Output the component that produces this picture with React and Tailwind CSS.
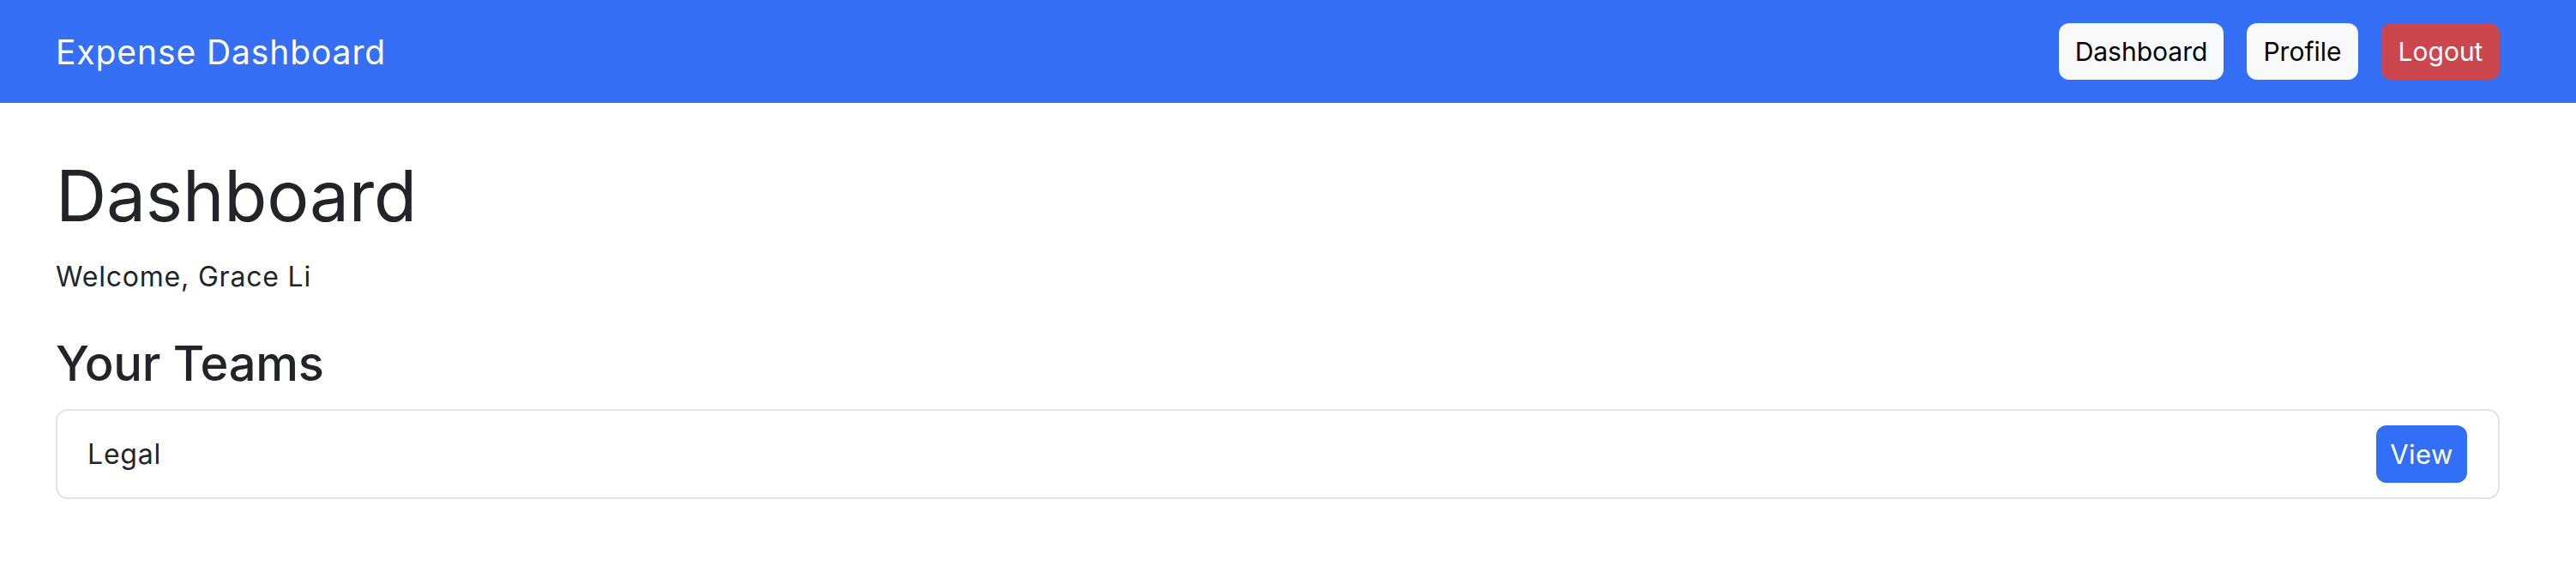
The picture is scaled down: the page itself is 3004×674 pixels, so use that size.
import React from "react";

const font = { fontFamily: "Inter, 'Noto Sans', 'Liberation Sans', sans-serif" };

function NavButton({ children, className }) {
  return (
    <button
      className={`h-[66px] rounded-[12px] text-[30px] leading-none flex items-center justify-center ${className}`}
    >
      {children}
    </button>
  );
}

function Navbar() {
  return (
    <nav className="h-[120px] bg-[#346ff5] flex items-center justify-between pl-[65px] pr-[89px]">
      <a className="text-white text-[39px] leading-none tracking-[0.9px]">Expense Dashboard</a>
      <div className="flex items-center gap-[27px]">
        <NavButton className="w-[192px] bg-[#f8f9fa] text-black">Dashboard</NavButton>
        <NavButton className="w-[130px] bg-[#f8f9fa] text-black">Profile</NavButton>
        <NavButton className="w-[138px] bg-[#cc464d] text-white">Logout</NavButton>
      </div>
    </nav>
  );
}

function TeamItem({ name }) {
  return (
    <li className="flex items-center justify-between border-2 border-[#e0e3e6] rounded-[14px] pl-[35px] pr-[36px] py-[17px]">
      <span className="text-[32px] leading-[48px] tracking-[0.8px]">{name}</span>
      <button className="w-[106px] h-[67px] rounded-[12px] bg-[#316ff6] text-white text-[31px] leading-none tracking-[0.4px]">
        View
      </button>
    </li>
  );
}

export default function App() {
  const teams = ["Legal"];
  return (
    <div className="min-h-screen bg-white text-[#212529]" style={font}>
      <Navbar />
      <main className="pl-[65px] pr-[89px] pt-[60px]">
        <h1 className="text-[82px] leading-[98px] font-normal tracking-[-0.2px]">Dashboard</h1>
        <p className="mt-[21px] text-[32px] leading-[48px] tracking-[0.8px]">Welcome, Grace Li</p>
        <h3 className="mt-[44px] text-[56px] leading-[67px] font-medium tracking-[-0.3px]">Your Teams</h3>
        <ul className="mt-[19px]">
          {teams.map((t) => (
            <TeamItem key={t} name={t} />
          ))}
        </ul>
      </main>
    </div>
  );
}
